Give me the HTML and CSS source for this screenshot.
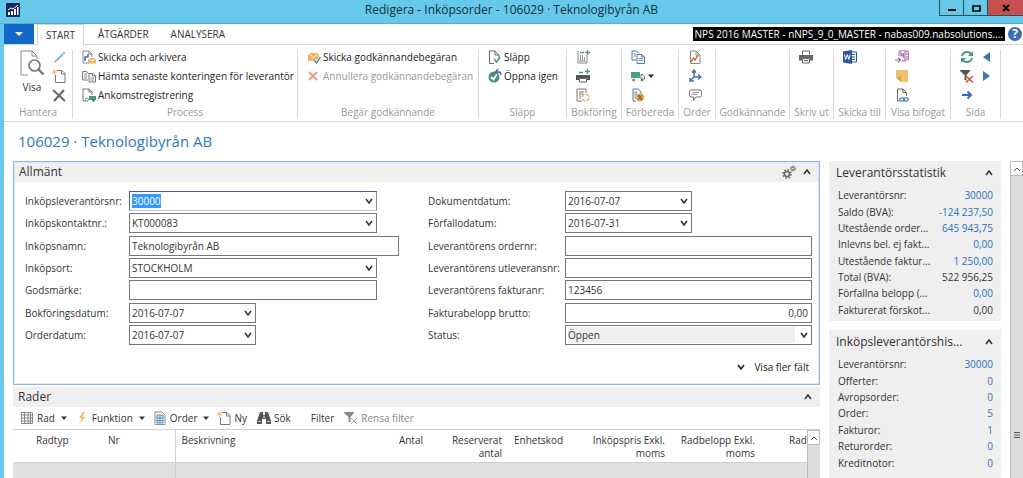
FILE: index.html
```html
<!DOCTYPE html>
<html lang="sv">
<head>
    <meta charset="UTF-8">
    <meta name="viewport" content="width=device-width, initial-scale=1.0">
    <title>Redigera - Inköpsorder - 106029 · Teknologibyrån AB</title>
    <link rel="stylesheet" href="styles.css">
</head>
<body>
    <!-- shared icons -->
    <svg class="sprite" aria-hidden="true">
        <symbol id="down" viewBox="0 0 8 8"><path d="M1 2l3 4 3-4" fill="none" stroke="currentColor" stroke-width="1.6"/></symbol>
        <symbol id="up" viewBox="0 0 8 8"><path d="M1 6l3-4 3 4" fill="none" stroke="currentColor" stroke-width="1.6"/></symbol>
        <symbol id="caret" viewBox="0 0 8 8"><path d="M1 2.500h6L4 6z" fill="currentColor"/></symbol>
        <symbol id="new" viewBox="0 0 14 14"><path d="M5 1.500h5l3 3v9H3.500V6M9.500 1.500V5H13" fill="none" stroke="#777"/><path d="M2.500 0v6M0 3h5.500M.5 1l4 4M4.500 1l-4 4" stroke="#f0b860" stroke-width=".8"/></symbol>
        <symbol id="funnel" viewBox="0 0 14 14"><path d="M0 1h10v1L6.500 6v6l-2-1.500V6L0 2z" fill="currentColor"/></symbol>
    </svg>

    <header class="titlebar">
        <svg class="app-icon" viewBox="0 0 14 14"><path fill="#14285a" d="M0 0h14v14H0z"/><path d="M2 12V9h2v3zm3 0V8h2v4zm3 0V6h2v6zm3 0V4h1.500v8z" fill="#fff"/><path d="M2 7l3-2 2 1 5-4" fill="none" stroke="#fff"/></svg>
        <h1>Redigera - Inköpsorder - 106029 · Teknologibyrån AB</h1>
        <div class="window-buttons">
            <button aria-label="Minimera"><svg viewBox="0 0 10 10"><path d="M1 6h8v2H1z"/></svg></button>
            <button aria-label="Maximera"><svg viewBox="0 0 10 10"><path d="M2 3h7v5H2z" fill="none" stroke="#000" stroke-width="1.700"/></svg></button>
            <button class="close" aria-label="Stäng"><svg viewBox="0 0 10 10"><path d="M2 2l6 6M8 2L2 8" stroke="#000" stroke-width="2"/></svg></button>
        </div>
    </header>

    <div class="window">
        <nav class="tabs">
            <button class="file" aria-label="Arkiv"><svg class="small" viewBox="0 0 8 8"><path d="M0 2h8L4 6z" fill="#fff"/></svg></button>
            <button class="tab active">START</button>
            <button class="tab">ÅTGÄRDER</button>
            <button class="tab">ANALYSERA</button>
            <span class="server">NPS 2016 MASTER - nNPS_9_0_MASTER - nabas009.nabsolutions....</span>
            <button class="help" aria-label="Hjälp">?</button>
        </nav>

        <div class="ribbon">
            <section class="group">
                <div class="tools wide">
                    <button class="large">
                        <svg viewBox="0 0 24 28"><path d="M8 25H1V1h11l5 5v3M12 1v5h5" fill="none" stroke="#888"/><circle cx="14.500" cy="15.500" r="5.500" fill="#fff" stroke="#777" stroke-width="1.600"/><path d="M18.500 19.500l5 5" stroke="#777" stroke-width="2.400"/></svg>
                        Visa
                    </button>
                    <div class="stack">
                        <button aria-label="Redigera"><svg viewBox="0 0 14 14"><path d="M4 11l7-7" stroke="#8ab6dc" stroke-width="2.200"/><path d="M11.500 3.500l1-1M3 12l1-1" stroke="#777" stroke-width="1.500"/></svg></button>
                        <button aria-label="Ny"><svg viewBox="0 0 14 14"><use href="#new"/></svg></button>
                        <button aria-label="Ta bort"><svg viewBox="0 0 14 14"><path d="M1 2l12 11M12 2L2 13" stroke="#666" stroke-width="2"/></svg></button>
                    </div>
                </div>
                <h2>Hantera</h2>
            </section>

            <section class="group">
                <div class="tools">
                    <div class="stack">
                        <button><svg viewBox="0 0 14 14"><path d="M7 13H1V1h6l3 3v3M7 1v3h3" fill="none" stroke="#888"/><path d="M3 11V7h3V4" fill="none" stroke="#3f73b5" stroke-width="1.600"/><path d="M6 8h8v5.500H6z" fill="#efb45c"/><path d="M6 8l4 3 4-3" fill="none" stroke="#fff"/></svg>Skicka och arkivera</button>
                        <button><svg viewBox="0 0 14 14"><path d="M6 11H.5V2.500h4l2 2M8 4.500h3l2.500 2.500v6H7V4.500zM10.500 4.500V7h3" fill="none" stroke="#777"/><path d="M2 5h3M2 7h3M2 9h3M8.500 9H12M8.500 11H12" stroke="#888"/></svg>Hämta senaste konteringen för leverantör</button>
                        <button><svg viewBox="0 0 14 14"><path d="M4 13H1V1h6l3 3v3M7 1v3h3" fill="none" stroke="#777"/><path d="M7 8h7v4H7z" fill="#489b7c"/><circle cx="5" cy="11.500" r="1.500" fill="#fff" stroke="#489b7c"/><circle cx="11.500" cy="12.500" r="1.300" fill="#3a7560"/></svg>Ankomstregistrering</button>
                    </div>
                </div>
                <h2>Process</h2>
            </section>

            <section class="group">
                <div class="tools">
                    <div class="stack">
                        <button><svg viewBox="0 0 14 14"><path d="M1 3h11v8H1z" fill="#efb45c"/><path d="M1 3l5.500 4.500L12 3" fill="none" stroke="#fff"/><path d="M7 10l2.500 3L13.500 7" fill="none" stroke="#fff" stroke-width="3"/><path d="M7 10l2.500 3L13.500 7" fill="none" stroke="#5c8e94" stroke-width="1.500"/></svg>Skicka godkännandebegäran</button>
                        <button disabled><svg viewBox="0 0 14 14"><path d="M2 3l8 8M10 3l-8 8" stroke="#eda088" stroke-width="2.200"/></svg>Annullera godkännandebegäran</button>
                    </div>
                </div>
                <h2>Begär godkännande</h2>
            </section>

            <section class="group">
                <div class="tools">
                    <div class="stack">
                        <button><svg viewBox="0 0 14 14"><path d="M6 13.500H1.500V1H7l4 4v3M7 1v4h4" fill="none" stroke="#666"/><path d="M6 9l2.500 3L12 7" fill="none" stroke="#4c9678" stroke-width="1.500"/></svg>Släpp</button>
                        <button><svg viewBox="0 0 14 14"><circle cx="6" cy="8" r="5.500" fill="#469179"/><path d="M3 8l2.500 2.500L9 5" fill="none" stroke="#fff" stroke-width="1.800"/><path d="M8 3h3q2 0 2 3M10 0L7.500 3 10 5" fill="none" stroke="#3f69ad" stroke-width="1.400"/></svg>Öppna igen</button>
                    </div>
                </div>
                <h2>Släpp</h2>
            </section>

            <section class="group">
                <div class="tools">
                    <div class="stack">
                        <button aria-label="Bokför"><svg viewBox="0 0 14 14"><path d="M2 1v12h9V5" fill="none" stroke="#888"/><path d="M4.500 5v6M6.500 5v6M8.500 7v4M3 11h7" stroke="#999"/><path d="M4 2.500h4M9 2.500h5M11.500 0v5" stroke="#4c9c80" stroke-width="1.300"/></svg></button>
                        <button aria-label="Bokför och skriv ut"><svg viewBox="0 0 14 14"><path d="M0 6h14v5h-3V9H3v2H0z" fill="#555"/><path d="M3.500 9.500h7v3.500h-7z" fill="#fff" stroke="#666"/><path d="M3 3.500h4M9 2.500h5M11.500 0v5" stroke="#4c9c80" stroke-width="1.400"/></svg></button>
                        <button aria-label="Massbokför"><svg viewBox="0 0 14 14"><path d="M6 13H1V1h9v4M3 4h5M3 6h4M3 8h2M3 10h2" fill="none" stroke="#777"/><circle cx="9.500" cy="9.500" r="3.500" fill="#fff" stroke="#e4a46c" stroke-dasharray="4 1.500" stroke-width="1.300"/></svg></button>
                    </div>
                </div>
                <h2>Bokföring</h2>
            </section>

            <section class="group">
                <div class="tools">
                    <div class="stack">
                        <button aria-label="Kopiera dokument"><svg viewBox="0 0 14 14"><path d="M5 10H1V1h4.500L8 3.500M7 4.500h4L13.500 7v6.500H6v-9zM10.500 4.500V7h3" fill="none" stroke="#5279a6"/><path d="M2.500 4H5M2.500 6H5M7.500 8.500H12M7.500 10.500H12" stroke="#7690ad"/></svg></button>
                        <button aria-label="Leverans"><svg viewBox="0 0 14 14"><path d="M0 3h9v6H0z" fill="#4aa07d"/><path d="M10 5.500h2l1.500 2V10H10z" fill="none" stroke="#777"/><circle cx="2.500" cy="11" r="1.300" fill="#666"/><circle cx="11" cy="11" r="1.300" fill="#666"/></svg><svg class="small"><use href="#caret"/></svg></button>
                        <button aria-label="Rabatt"><svg viewBox="0 0 14 14"><path d="M5 13H2V1h5l3 3v2M3.500 4H6M3.500 6H6M3.500 8H5M3.500 10H5" fill="none" stroke="#53769c"/><circle cx="9" cy="9.500" r="4" fill="#e3a250"/><path d="M7.500 11.500l3-4" stroke="#643"/><path d="M7 8h1.500M9.500 11H11" stroke="#643" stroke-width="1.300"/></svg></button>
                    </div>
                </div>
                <h2>Förbereda</h2>
            </section>

            <section class="group">
                <div class="tools">
                    <div class="stack">
                        <button aria-label="Statistik"><svg viewBox="0 0 14 14"><path d="M2.500 1H8l4 4v8.500H2.500zM8 1v4h4" fill="none" stroke="#888"/><path d="M3 12l2.500-4 1.500 2 3-5" fill="none" stroke="#da683c" stroke-width="1.500"/></svg></button>
                        <button aria-label="Dimensioner"><svg viewBox="0 0 14 14"><path d="M6 2v6l-4 4M6 8h6M4 3.500L6 1l2 2.500M10 5.500L13 8l-3 2.500M2 9v3h4" fill="none" stroke="#3f72b7" stroke-width="1.400"/></svg></button>
                        <button aria-label="Kommentarer"><svg viewBox="0 0 14 14"><path d="M3 2h9q1.500 0 1.500 1.500v4Q13.500 9 12 9H8l-2.500 3.500V9H3Q1.500 9 1.500 7.500v-4Q1.500 2 3 2z" fill="none" stroke="#777"/><path d="M4 4.500h7M4 6.500h5" stroke="#999"/></svg></button>
                    </div>
                </div>
                <h2>Order</h2>
            </section>

            <section class="group">
                <div class="tools"></div>
                <h2>Godkännande</h2>
            </section>

            <section class="group">
                <div class="tools">
                    <div class="stack">
                        <button aria-label="Skriv ut"><svg viewBox="0 0 14 14"><path d="M0 5h14v5.500h-3V8H3v2.500H0z" fill="#666"/><path d="M3.500 4.500V1h7v3.500M3.500 8.500h7V13h-7zM5 10.500h4" fill="none" stroke="#666"/></svg></button>
                    </div>
                </div>
                <h2>Skriv ut</h2>
            </section>

            <section class="group">
                <div class="tools">
                    <div class="stack">
                        <button aria-label="Microsoft Word"><svg viewBox="0 0 14 14"><path d="M8 2h5.500v10H8" fill="#fff" stroke="#2b579a"/><path d="M8 4.500h4M8 7h4M8 9.500h4" stroke="#2b579a" stroke-width="1.200"/><path d="M0 1.500L9 0v14l-9-1.500z" fill="#2b579a"/><path d="M1.500 4.500l1.200 5 1.600-5 1.600 5 1.200-5" fill="none" stroke="#fff"/></svg></button>
                    </div>
                </div>
                <h2>Skicka till</h2>
            </section>

            <section class="group">
                <div class="tools">
                    <div class="stack">
                        <button aria-label="OneNote"><svg viewBox="0 0 14 14"><path d="M4 6V1l6-1v11l-3-.5M10 1.500h3.500v8H10M11 4h2M11 7h2" fill="none" stroke="#b587bd" stroke-width="1.300"/><path d="M6 6.500V3l2.500 4V3" fill="none" stroke="#a26fae" stroke-width="1.200"/><path d="M0 10h5M3 7.500L5.500 10 3 12.500" fill="none" stroke="#a26fae" stroke-width="1.200"/></svg></button>
                        <button aria-label="Anteckningar"><svg viewBox="0 0 14 14"><path d="M1 1h12v12H6L1 8z" fill="#efc36d"/><path d="M1 8h5v5z" fill="#d79e45"/></svg></button>
                        <button aria-label="Länkar"><svg viewBox="0 0 14 14"><path d="M5 13H2.500V1H8l3.500 3.500V8M8 1v3.500h3.500" fill="none" stroke="#666"/><ellipse cx="7" cy="11.500" rx="2.300" ry="1.600" fill="none" stroke="#4779b8" stroke-width="1.200"/><ellipse cx="11" cy="11.500" rx="2.300" ry="1.600" fill="none" stroke="#4779b8" stroke-width="1.200"/></svg></button>
                    </div>
                </div>
                <h2>Visa bifogat</h2>
            </section>

            <section class="group">
                <div class="tools">
                    <div class="stack">
                        <button aria-label="Uppdatera"><svg viewBox="0 0 14 14"><path d="M2 6q1-4 5-4 3 0 4.500 2.500M12 8q-1 4-5 4-3 0-4.500-2.500" fill="none" stroke="#4c9c7c" stroke-width="1.900"/><path d="M13 1v5H8zM1 13V8h5z" fill="#4c9c7c"/></svg></button>
                        <button class="dark" aria-label="Rensa filter"><svg viewBox="0 0 14 14"><use href="#funnel"/><path d="M6 7l7 6.500M13 7l-7 6.500" stroke="#d94f38" stroke-width="1.500"/></svg></button>
                        <button aria-label="Gå till"><svg viewBox="0 0 14 14"><path d="M2 7h9M7.500 3.500L11 7l-3.500 3.500" fill="none" stroke="#2f6fb5" stroke-width="1.900"/></svg></button>
                    </div>
                    <div class="stack">
                        <button aria-label="Föregående"><svg viewBox="0 0 14 14"><path d="M10 2v10L3 7z" fill="#3b76b8"/></svg></button>
                        <button aria-label="Nästa"><svg viewBox="0 0 14 14"><path d="M3 2v10l7-5z" fill="#3b76b8"/></svg></button>
                    </div>
                </div>
                <h2>Sida</h2>
            </section>
        </div>

        <h2 class="page-title">106029 · Teknologibyrån AB</h2>

        <div class="content">
            <main>
                <section class="card general">
                    <div class="card-head">
                        <h3>Allmänt</h3>
                        <button aria-label="Anpassa"><svg class="gears" viewBox="0 0 14 14"><circle cx="5" cy="9" r="2.500" fill="none" stroke="#666" stroke-width="1.500"/><circle cx="5" cy="9" r="4" fill="none" stroke="#666" stroke-width="1.600" stroke-dasharray="1.500 1.640"/><circle cx="11" cy="3.500" r="1.400" fill="none" stroke="#666"/><circle cx="11" cy="3.500" r="2.400" fill="none" stroke="#666" stroke-width="1.200" stroke-dasharray="1 .9"/></svg></button>
                        <button aria-label="Dölj Allmänt"><svg class="small"><use href="#up"/></svg></button>
                    </div>
                    <form class="fields">
                        <div class="column">
                            <label for="vendor">Inköpsleverantörsnr:</label>
                            <div class="box focus"><input id="vendor" value="30000" autofocus><button type="button" aria-label="Välj leverantör"><svg class="small"><use href="#down"/></svg></button></div>
                            <label for="contact">Inköpskontaktnr.:</label>
                            <div class="box"><input id="contact" value="KT000083"><button type="button" aria-label="Välj kontakt"><svg class="small"><use href="#down"/></svg></button></div>
                            <label for="name">Inköpsnamn:</label>
                            <div class="box long"><input id="name" value="Teknologibyrån AB"></div>
                            <label for="city">Inköpsort:</label>
                            <div class="box"><input id="city" value="STOCKHOLM"><button type="button" aria-label="Välj ort"><svg class="small"><use href="#down"/></svg></button></div>
                            <label for="mark">Godsmärke:</label>
                            <div class="box"><input id="mark"></div>
                            <label for="posting">Bokföringsdatum:</label>
                            <div class="box date"><input id="posting" value="2016-07-07"><button type="button" aria-label="Välj bokföringsdatum"><svg class="small"><use href="#down"/></svg></button></div>
                            <label for="orderdate">Orderdatum:</label>
                            <div class="box date"><input id="orderdate" value="2016-07-07"><button type="button" aria-label="Välj orderdatum"><svg class="small"><use href="#down"/></svg></button></div>
                        </div>
                        <div class="column second">
                            <label for="docdate">Dokumentdatum:</label>
                            <div class="box date"><input id="docdate" value="2016-07-07"><button type="button" aria-label="Välj dokumentdatum"><svg class="small"><use href="#down"/></svg></button></div>
                            <label for="due">Förfallodatum:</label>
                            <div class="box date"><input id="due" value="2016-07-31"><button type="button" aria-label="Välj förfallodatum"><svg class="small"><use href="#down"/></svg></button></div>
                            <label for="vorder">Leverantörens ordernr:</label>
                            <div class="box"><input id="vorder"></div>
                            <label for="vship">Leverantörens utleveransnr:</label>
                            <div class="box"><input id="vship"></div>
                            <label for="vinvoice">Leverantörens fakturanr:</label>
                            <div class="box"><input id="vinvoice" value="123456"></div>
                            <label for="amount">Fakturabelopp brutto:</label>
                            <div class="box"><input id="amount" class="num" value="0,00"></div>
                            <label for="status">Status:</label>
                            <div class="box status"><select id="status"><option>Öppen</option></select><svg class="small"><use href="#down"/></svg></div>
                        </div>
                    </form>
                    <button class="more"><svg class="small"><use href="#down"/></svg>Visa fler fält</button>
                </section>

                <section class="card lines">
                    <div class="card-head">
                        <h3>Rader</h3>
                        <button aria-label="Dölj Rader"><svg class="small"><use href="#up"/></svg></button>
                    </div>
                    <div class="toolbar">
                        <button><svg viewBox="0 0 14 14"><path d="M1.500 1.500h11v11h-11zM1.500 4h11M1.500 7h11M1.500 10h11M4.500 1.500v11M8 1.500v11M10.500 1.500v11" fill="none" stroke="#888"/></svg>Rad<svg class="small"><use href="#caret"/></svg></button>
                        <button><svg viewBox="0 0 14 14"><path d="M8 1L4 7h3l-3 6 6-7H7l3-5z" fill="#f0b055"/></svg>Funktion<svg class="small"><use href="#caret"/></svg></button>
                        <button><svg viewBox="0 0 14 14"><path d="M2 1h7l3 3v9.500H2z" fill="#fff" stroke="#888"/><path d="M4 4h6v8H4zM4 7h6M4 9.500h6M7 4v8" fill="#d4e5f4" stroke="#5f8fbd"/></svg>Order<svg class="small"><use href="#caret"/></svg></button>
                        <button><svg viewBox="0 0 14 14"><use href="#new"/></svg>Ny</button>
                        <button><svg viewBox="0 0 14 14"><path d="M3 1h3v3h2V1h3l3 9v3H9V8H5v5H0v-3z" fill="#555"/><path d="M1.500 10.500h2M10.500 10.500h2M6 6h2" stroke="#fff"/></svg>Sök</button>
                        <button class="plain">Filter</button>
                        <button disabled><svg viewBox="0 0 14 14"><use href="#funnel"/><path d="M7 7l6 6M13 7l-6 6" stroke="#aaa"/></svg>Rensa filter</button>
                    </div>
                    <div class="grid">
                        <div class="table-wrap">
                            <table>
                                <colgroup><col class="c-type"><col class="c-nr"><col class="c-desc"><col class="c-qty"><col class="c-qty"><col class="c-unit"><col class="c-price"><col class="c-sum"><col></colgroup>
                                <thead>
                                    <tr><th class="first">Radtyp</th><th class="frozen">Nr</th><th>Beskrivning</th><th class="num">Antal</th><th class="num">Reserverat antal</th><th>Enhetskod</th><th class="num">Inköpspris Exkl. moms</th><th class="num">Radbelopp Exkl. moms</th><th class="last">Rad</th></tr>
                                </thead>
                                <tbody>
                                    <tr><td></td><td class="frozen"></td><td></td><td></td><td></td><td></td><td></td><td></td><td></td></tr>
                                </tbody>
                            </table>
                        </div>
                        <div class="scrollbar"><button aria-label="Rulla upp"><svg class="small" viewBox="0 0 8 8"><path d="M1 6l3-3 3 3" fill="none" stroke="#555"/></svg></button></div>
                    </div>
                </section>
            </main>

            <aside>
                <section class="fact">
                    <div class="card-head"><h3>Leverantörsstatistik</h3><button aria-label="Dölj statistik"><svg class="small"><use href="#up"/></svg></button></div>
                    <dl>
                        <dt>Leverantörsnr:</dt><dd><a href="#">30000</a></dd>
                        <dt>Saldo (BVA):</dt><dd><a href="#">-124 237,50</a></dd>
                        <dt>Utestående order...</dt><dd><a href="#">645 943,75</a></dd>
                        <dt>Inlevns bel. ej fakt...</dt><dd><a href="#">0,00</a></dd>
                        <dt>Utestående faktur...</dt><dd><a href="#">1 250,00</a></dd>
                        <dt>Total (BVA):</dt><dd>522 956,25</dd>
                        <dt>Förfallna belopp (...</dt><dd><a href="#">0,00</a></dd>
                        <dt>Fakturerat förskot...</dt><dd>0,00</dd>
                    </dl>
                </section>
                <section class="fact history">
                    <div class="card-head"><h3>Inköpsleverantörshis...</h3><button aria-label="Dölj historik"><svg class="small"><use href="#up"/></svg></button></div>
                    <dl>
                        <dt>Leverantörsnr:</dt><dd><a href="#">30000</a></dd>
                        <dt>Offerter:</dt><dd><a href="#">0</a></dd>
                        <dt>Avropsorder:</dt><dd><a href="#">0</a></dd>
                        <dt>Order:</dt><dd><a href="#">5</a></dd>
                        <dt>Fakturor:</dt><dd><a href="#">1</a></dd>
                        <dt>Returorder:</dt><dd><a href="#">0</a></dd>
                        <dt>Kreditnotor:</dt><dd><a href="#">0</a></dd>
                    </dl>
                </section>
            </aside>

            <div class="scrollbar page-scroll">
                <button aria-label="Rulla upp"><svg class="small" viewBox="0 0 8 8"><path d="M1 6l3-3 3 3" fill="none" stroke="#555"/></svg></button>
                <svg class="grip small" viewBox="0 0 8 8"><path d="M1 1.500h6M1 4h6M1 6.500h6" stroke="#555"/></svg>
            </div>
        </div>
    </div>

    <script>
        const vendor = document.getElementById('vendor');
        vendor.focus();
        vendor.select();
    </script>
</body>
</html>
```
FILE: styles.css
```css
* {
    box-sizing: border-box;
}
body {
    margin: 0;
    height: 100vh;
    display: flex;
    flex-direction: column;
    overflow: hidden;
    background: #66c9ea;
    color: #333;
    font-family: "Open Sans", "Noto Sans", sans-serif;
    font-size: 10px;
    line-height: 14px;
}
h1, h2, h3, dl, dd {
    margin: 0;
    font-weight: normal;
}
button, input, select {
    margin: 0;
    padding: 0;
    border: none;
    background: none;
    color: inherit;
    font: inherit;
}
button {
    display: flex;
    align-items: center;
    white-space: nowrap;
}
svg {
    display: block;
    flex: none;
    width: 14px;
    height: 14px;
}
.small {
    width: 8px;
    height: 8px;
}
.sprite {
    position: absolute;
    width: 0;
    height: 0;
}

/* title bar */
.titlebar {
    display: grid;
    grid-template-columns: 1fr auto 1fr;
    height: 24px;
    border-bottom: 1px solid #58aecb;
}
.titlebar h1 {
    color: #12303c;
    font-size: 12px;
    line-height: 20px;
}
.app-icon {
    margin: 3px 6px;
}
.window-buttons {
    display: flex;
    justify-self: end;
    height: 16px;
}
.window-buttons button {
    width: 24px;
    justify-content: center;
    border: 1px solid #26505e;
    border-top: none;
    border-right: none;
}
.window-buttons svg {
    width: 10px;
    height: 10px;
}
.window-buttons .close {
    width: 36px;
    background: #c75050;
}

.window {
    flex: 1;
    min-height: 0;
    display: flex;
    flex-direction: column;
    margin-left: 4px;
    background: #fff;
}

/* tabs */
.tabs {
    display: flex;
    height: 21px;
    border-bottom: 1px solid #d4d4d4;
}
.file {
    width: 30px;
    justify-content: center;
    background: #1168c8;
}
.tab {
    padding: 0 11px;
}
.tab.active {
    height: 21px;
    margin: 0 3px;
    padding: 0 8px;
    border: 1px solid #d4d4d4;
    border-bottom: none;
    background: #fff;
}
.server {
    align-self: center;
    margin-left: auto;
    padding: 0 2px;
    background: #000;
    color: #fff;
}
.help {
    align-self: center;
    justify-content: center;
    width: 14px;
    height: 14px;
    margin: 0 1px 0 3px;
    border-radius: 50%;
    background: #3a6fb5;
    color: #fff;
    font-size: 12px;
    font-weight: bold;
}

/* ribbon */
.ribbon {
    display: grid;
    grid-template-columns: 69px 225px 181px 88px 55px 57px 37px 74px 44px 52px 65px 50px;
    height: 77px;
    padding: 5px 0 2px;
    border-bottom: 1px solid #d4d4d4;
}
.group {
    display: flex;
    flex-direction: column;
    justify-content: space-between;
    border-right: 1px solid #d9d9d9;
}
.group h2 {
    color: #999;
    font-size: 10px;
    text-align: center;
    white-space: nowrap;
}
.tools {
    display: flex;
    gap: 6px;
    padding-left: 9px;
}
.tools.wide {
    gap: 8px;
    padding-left: 16px;
}
.stack {
    display: flex;
    flex-direction: column;
    align-items: flex-start;
    gap: 5px;
}
.stack button {
    gap: 2px;
    height: 14px;
    color: #222;
}
.stack button:disabled {
    color: #999;
}
.stack .dark {
    color: #555;
}
.large {
    flex-direction: column;
    gap: 2px;
}
.large svg {
    width: 24px;
    height: 28px;
}

.page-title {
    padding: 8px 14px;
    color: #3079b8;
    font-size: 15px;
    line-height: 23px;
}

/* page body */
.content {
    flex: 1;
    min-height: 0;
    display: flex;
    padding-left: 9px;
}
main {
    flex: 1;
    min-width: 0;
    display: flex;
    flex-direction: column;
}
.card-head {
    display: flex;
    align-items: center;
    gap: 7px;
    height: 20px;
    padding: 0 8px 0 5px;
    background: #efefef;
}
.card-head h3 {
    flex: 1;
    font-size: 12px;
    white-space: nowrap;
}
.general {
    border: 1px solid #8fb4ea;
    outline: 1px solid #dbe7f8;
    outline-offset: -2px;
}
.fields {
    display: flex;
    justify-content: space-between;
    padding: 8px 7px 0 11px;
}
.column {
    display: grid;
    grid-template-columns: 104px 270px;
    grid-template-rows: repeat(7, 1fr);
    align-items: center;
    height: 156px;
}
.column.second {
    grid-template-columns: 137px 247px;
}
.box {
    display: flex;
    align-items: center;
    width: 248px;
    max-width: 100%;
    height: 20px;
    padding: 0 3px 0 2px;
    border: 1px solid #777;
    background: #fff;
}
.box.long {
    width: 270px;
}
.box.date {
    width: 127px;
}
.box.focus {
    border-color: #5b5b96 #8c8cae #c4c4d4 #5b5b96;
}
.box input, .box select {
    flex: 1;
    min-width: 0;
    height: 16px;
    outline: none;
}
.box input::selection {
    background: #3399ff;
    color: #fff;
}
.box .num {
    text-align: right;
}
.box select {
    appearance: none;
    background: #efefef;
    margin-right: 5px;
}
.more {
    gap: 9px;
    margin-left: auto;
    padding: 14px 10px 10px;
    color: #222;
}

/* lines */
.lines {
    flex: 1;
    min-height: 0;
    display: flex;
    flex-direction: column;
    margin-top: 2px;
}
.toolbar {
    display: flex;
    gap: 10px;
    height: 22px;
    padding-left: 7px;
}
.toolbar button {
    gap: 3px;
}
.toolbar .small {
    margin: 0 -3px 0 2px;
}
.toolbar .plain {
    padding-left: 10px;
}
.toolbar button:disabled {
    color: #8a8a8a;
}
.grid {
    flex: 1;
    min-height: 0;
    display: flex;
    border-top: 1px solid #d0d0d0;
}
.table-wrap {
    flex: 1;
    min-width: 0;
    overflow: hidden;
    background: #e0e0e0;
}
table {
    width: 100%;
    table-layout: fixed;
    border-collapse: collapse;
}
thead {
    background: #fff;
}
th {
    height: 32px;
    padding: 4px 6px 0;
    border-bottom: 1px solid #d0d0d0;
    font-weight: normal;
    line-height: 13px;
    text-align: left;
    vertical-align: top;
}
th.num {
    padding-left: 0;
    text-align: right;
}
th.first {
    padding-left: 23px;
}
th.last {
    padding: 4px 0 0 28px;
}
td {
    height: 18px;
}
.frozen {
    border-right: 1px solid #d0d0d0;
}
.c-type { width: 89px; }
.c-nr { width: 73px; }
.c-desc { width: 175px; }
.c-qty { width: 79px; }
.c-unit { width: 82px; }
.c-price { width: 81px; }
.c-sum { width: 90px; }

/* fact boxes */
aside {
    width: 172px;
    margin: 0 9px;
    display: flex;
    flex-direction: column;
    gap: 9px;
}
.fact {
    padding-bottom: 3px;
    background: #efefef;
}
.fact .card-head {
    height: 23px;
    padding: 0 8px 0 7px;
}
.fact dl {
    display: grid;
    grid-template-columns: 1fr auto;
    grid-auto-rows: 1fr;
    align-items: center;
    height: 134px;
    padding: 3px 8px 0 9px;
}
.fact.history {
    flex: 1;
}
.fact.history dl {
    height: 118px;
}
dt {
    white-space: nowrap;
}
dd {
    text-align: right;
}
dd a {
    color: #2a6fc0;
    text-decoration: none;
}

/* scrollbars */
.scrollbar {
    display: flex;
    flex-direction: column;
    width: 13px;
    border-left: 1px solid #bbb;
    background: #dcdcdc;
}
.scrollbar button {
    justify-content: center;
    height: 15px;
    border: 1px solid #bbb;
    border-left: none;
    background: #fff;
}
.page-scroll .grip {
    margin: auto 2px 39px;
}
```
